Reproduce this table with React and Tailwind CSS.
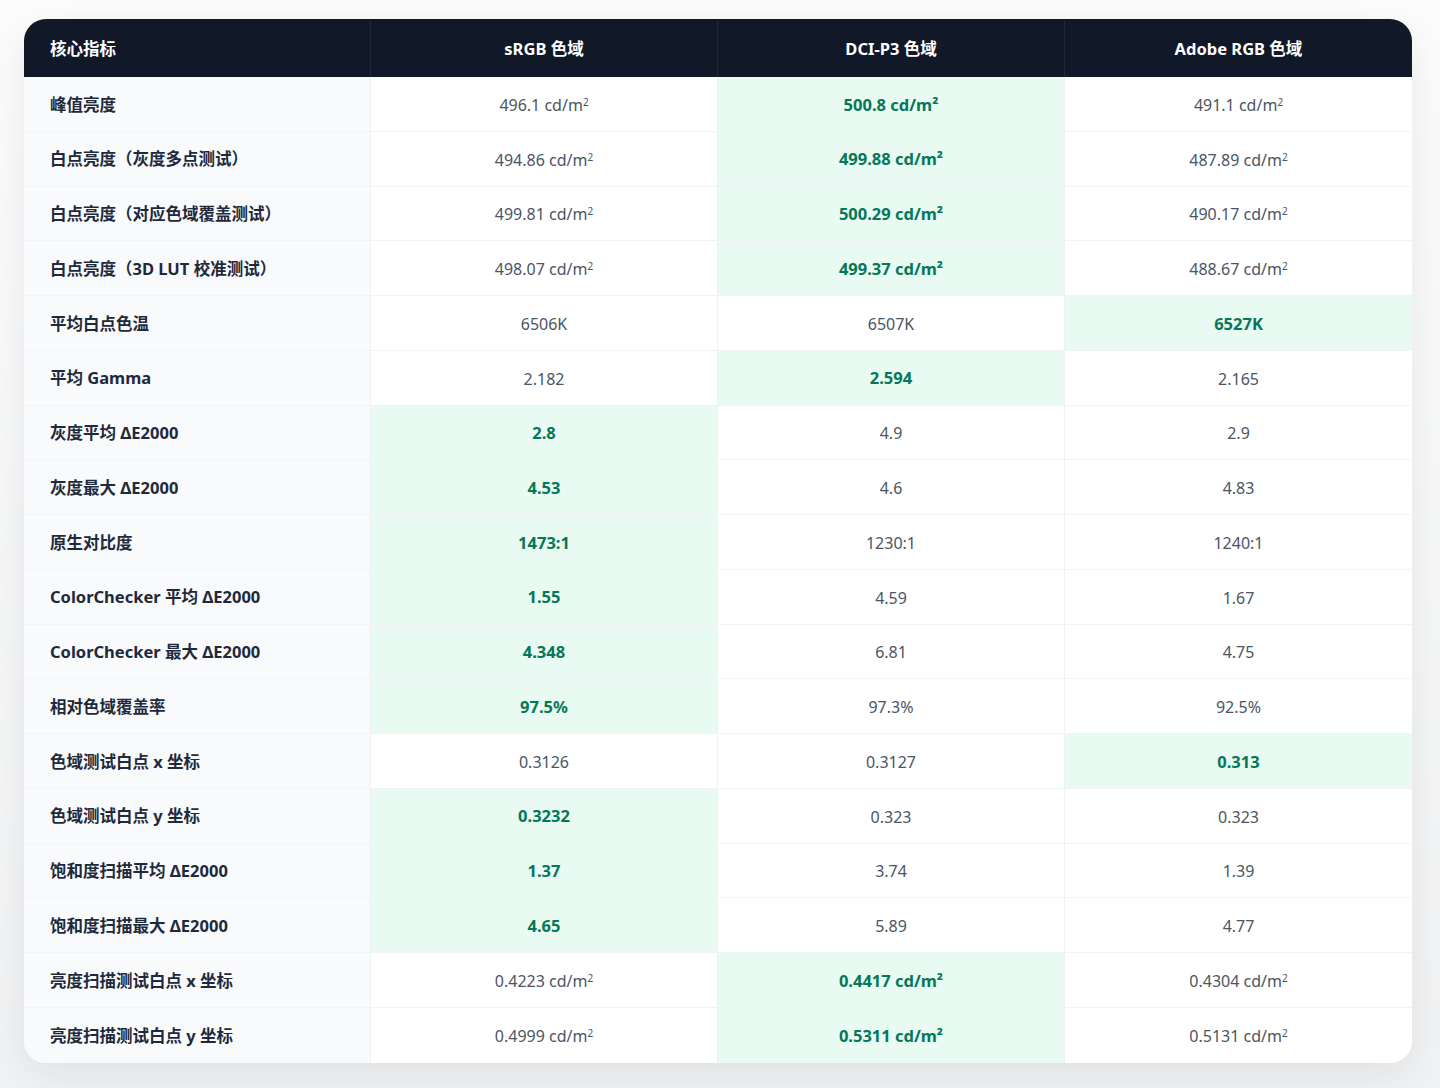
import React from "react";

const rows = [
  ["峰值亮度", ["496.1", "500.8", "491.1"], 1, true],
  ["白点亮度（灰度多点测试）", ["494.86", "499.88", "487.89"], 1, true],
  ["白点亮度（对应色域覆盖测试）", ["499.81", "500.29", "490.17"], 1, true],
  ["白点亮度（3D LUT 校准测试）", ["498.07", "499.37", "488.67"], 1, true],
  ["平均白点色温", ["6506K", "6507K", "6527K"], 2, false],
  ["平均 Gamma", ["2.182", "2.594", "2.165"], 1, false],
  ["灰度平均 ΔE2000", ["2.8", "4.9", "2.9"], 0, false],
  ["灰度最大 ΔE2000", ["4.53", "4.6", "4.83"], 0, false],
  ["原生对比度", ["1473:1", "1230:1", "1240:1"], 0, false],
  ["ColorChecker 平均 ΔE2000", ["1.55", "4.59", "1.67"], 0, false],
  ["ColorChecker 最大 ΔE2000", ["4.348", "6.81", "4.75"], 0, false],
  ["相对色域覆盖率", ["97.5%", "97.3%", "92.5%"], 0, false],
  ["色域测试白点 x 坐标", ["0.3126", "0.3127", "0.313"], 2, false],
  ["色域测试白点 y 坐标", ["0.3232", "0.323", "0.323"], 0, false],
  ["饱和度扫描平均 ΔE2000", ["1.37", "3.74", "1.39"], 0, false],
  ["饱和度扫描最大 ΔE2000", ["4.65", "5.89", "4.77"], 0, false],
  ["亮度扫描测试白点 x 坐标", ["0.4223", "0.4417", "0.4304"], 1, true],
  ["亮度扫描测试白点 y 坐标", ["0.4999", "0.5311", "0.5131"], 1, true],
];

const font = { fontFamily: '"Noto Sans", "Noto Sans CJK SC", sans-serif' };

export default function App() {
  return (
    <div className="min-h-[1088px] w-full bg-gradient-to-b from-[#fcfcfc] to-[#f1f2f3] pt-[19px] pl-6 pb-6" style={font}>
      <div className="w-[1388px] rounded-[22px] bg-white shadow-[0_12px_40px_rgba(15,23,42,0.08)] overflow-hidden">
        <div className="grid grid-cols-4 h-[58px] pt-[2px] bg-[#111827] text-white text-[16.5px] font-bold">
          <div className="flex items-center pl-[26px] border-r border-[#1f2937]">核心指标</div>
          <div className="flex items-center justify-center border-r border-[#1f2937]">sRGB 色域</div>
          <div className="flex items-center justify-center border-r border-[#1f2937]">DCI-P3 色域</div>
          <div className="flex items-center justify-center">Adobe RGB 色域</div>
        </div>
        {rows.map(([label, vals, best, unit], i) => (
          <div
            key={i}
            className={`grid grid-cols-4 h-[54.75px] ${i < rows.length - 1 ? "border-b border-[#f1f3f6]" : ""}`}
          >
            <div className="flex items-center pl-[26px] pt-[2px] bg-[#f8fafc] border-r border-[#eef1f5] text-[16.5px] font-bold text-[#1e293b]">
              {label}
            </div>
            {vals.map((v, j) => (
              <div
                key={j}
                className={`flex items-center justify-center pt-[2px] ${j < 2 ? "border-r border-[#eef1f5]" : ""} ${
                  j === best ? "bg-[#e9faf2] text-[#047857] font-bold text-[16.5px]" : "bg-white text-[#4b5563] text-[16px]"
                }`}
              >
                {unit ? (
                  j === best ? (
                    <span>{v} cd/m²</span>
                  ) : (
                    <span>
                      {v} cd/m<sup className="text-[10px]">2</sup>
                    </span>
                  )
                ) : (
                  <span>{v}</span>
                )}
              </div>
            ))}
          </div>
        ))}
      </div>
    </div>
  );
}
